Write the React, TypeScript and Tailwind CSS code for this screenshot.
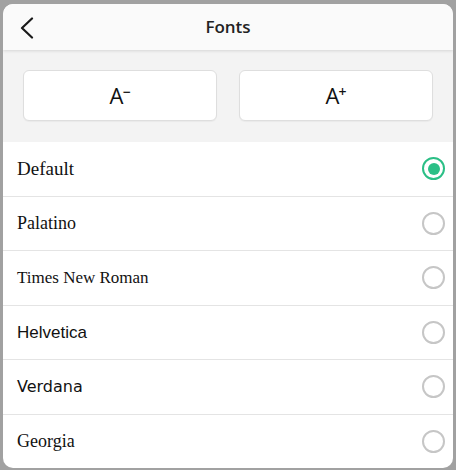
import { useState } from 'react';

const fonts = [
  { name: 'Default', cls: "font-['Liberation_Serif',serif] text-[19px]" },
  { name: 'Palatino', cls: "font-['Liberation_Serif',serif] text-[18px]" },
  { name: 'Times New Roman', cls: "font-['Liberation_Serif',serif] text-[17px]" },
  { name: 'Helvetica', cls: "font-['Liberation_Sans',sans-serif] text-[17px]" },
  { name: 'Verdana', cls: "font-['DejaVu_Sans',sans-serif] text-[16px]" },
  { name: 'Georgia', cls: "font-['Liberation_Serif',serif] text-[18px]" },
];

export default function App() {
  const [selected, setSelected] = useState('Default');

  return (
    <div className="w-[456px] h-[470px] overflow-hidden bg-[#a1a1a1] pt-[4px] pb-[2px] px-[3px]">
      <div className="h-full rounded-[10px] bg-white overflow-hidden flex flex-col">
        <header className="relative z-10 h-[46px] shrink-0 bg-[#fafafa] shadow-[0_1px_3px_rgba(0,0,0,0.12)] flex items-center justify-center">
          <button className="absolute left-[14px] top-[12px] w-[20px] h-[24px] flex items-center justify-center">
            <svg width="14" height="22" viewBox="0 0 14 22" fill="none">
              <polyline points="12,1.5 2,11 12,20.5" stroke="#1a1a1a" strokeWidth="2.2" strokeLinecap="round" strokeLinejoin="round" />
            </svg>
          </button>
          <h1 className="font-['Open_Sans',sans-serif] text-[17px] font-semibold text-[#222]">Fonts</h1>
        </header>

        <div className="shrink-0 bg-[#f3f3f3] px-5 pt-5 pb-[21px] grid grid-cols-2 gap-[22px]">
          <button className="h-[51px] rounded-[6px] bg-white border border-[#dedede] shadow-[0_1px_1px_rgba(0,0,0,0.04)] flex items-center justify-center font-['Open_Sans',sans-serif] text-[22px] text-[#111]">
            A<span className="text-[14px] font-semibold -mt-[9px] -ml-[1px]">−</span>
          </button>
          <button className="h-[51px] rounded-[6px] bg-white border border-[#dedede] shadow-[0_1px_1px_rgba(0,0,0,0.04)] flex items-center justify-center font-['Open_Sans',sans-serif] text-[22px] text-[#111]">
            A<span className="text-[14px] font-semibold -mt-[9px] -ml-[1px]">+</span>
          </button>
        </div>

        <ul className="flex-1 flex flex-col">
          {fonts.map((f, i) => (
            <li
              key={f.name}
              onClick={() => setSelected(f.name)}
              className={`flex-1 flex items-center justify-between pl-[14px] pr-[8px] text-[#111] ${i > 0 ? 'border-t border-[#e4e4e4]' : ''}`}
            >
              <span className={f.cls}>{f.name}</span>
              {selected === f.name ? (
                <span className="w-[23px] h-[23px] rounded-full border-[2.5px] border-[#2bbf86] flex items-center justify-center">
                  <span className="w-[12px] h-[12px] rounded-full bg-[#2bbf86]" />
                </span>
              ) : (
                <span className="w-[23px] h-[23px] rounded-full border-2 border-[#c6c6c6]" />
              )}
            </li>
          ))}
        </ul>
      </div>
    </div>
  );
}
